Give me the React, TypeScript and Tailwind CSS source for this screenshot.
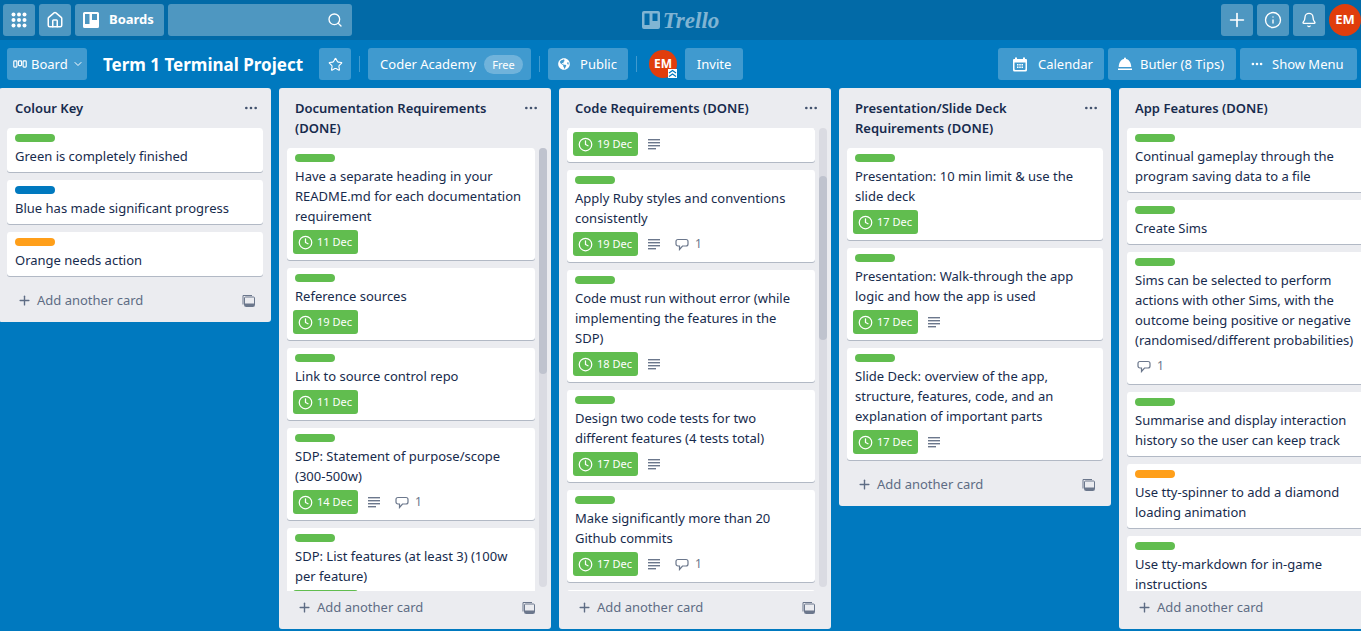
import React from "react";
import { Bell, Home, Info, Plus, Search, Star, ChevronDown, Ellipsis, Clock } from "lucide-react";
import { FaGlobeAmericas } from "react-icons/fa";

type CardT = { label?: string; lines?: string[]; date?: string; desc?: boolean; comments?: boolean };
type ListT = { title: string[]; cards: CardT[]; thumb?: [number, number]; };

const g = "bg-[#61bd4f]";
const lists: ListT[] = [
  {
    title: ["Colour Key"],
    cards: [
      { label: g, lines: ["Green is completely finished"] },
      { label: "bg-[#0079bf]", lines: ["Blue has made significant progress"] },
      { label: "bg-[#ff9f1a]", lines: ["Orange needs action"] },
    ],
  },
  {
    title: ["Documentation Requirements", "(DONE)"],
    thumb: [0, 226],
    cards: [
      { label: g, lines: ["Have a separate heading in your", "README.md for each documentation", "requirement"], date: "11 Dec" },
      { label: g, lines: ["Reference sources"], date: "19 Dec" },
      { label: g, lines: ["Link to source control repo"], date: "11 Dec" },
      { label: g, lines: ["SDP: Statement of purpose/scope", "(300-500w)"], date: "14 Dec", desc: true, comments: true },
      { label: g, lines: ["SDP: List features (at least 3) (100w", "per feature)"], date: "14 Dec" },
    ],
  },
  {
    title: ["Code Requirements (DONE)"],
    thumb: [48, 164],
    cards: [
      { date: "19 Dec", desc: true },
      { label: g, lines: ["Apply Ruby styles and conventions", "consistently"], date: "19 Dec", desc: true, comments: true },
      { label: g, lines: ["Code must run without error (while", "implementing the features in the", "SDP)"], date: "18 Dec", desc: true },
      { label: g, lines: ["Design two code tests for two", "different features (4 tests total)"], date: "17 Dec", desc: true },
      { label: g, lines: ["Make significantly more than 20", "Github commits"], date: "17 Dec", desc: true, comments: true },
      { label: g },
    ],
  },
  {
    title: ["Presentation/Slide Deck", "Requirements (DONE)"],
    cards: [
      { label: g, lines: ["Presentation: 10 min limit & use the", "slide deck"], date: "17 Dec" },
      { label: g, lines: ["Presentation: Walk-through the app", "logic and how the app is used"], date: "17 Dec", desc: true },
      { label: g, lines: ["Slide Deck: overview of the app,", "structure, features, code, and an", "explanation of important parts"], date: "17 Dec", desc: true },
    ],
  },
  {
    title: ["App Features (DONE)"],
    cards: [
      { label: g, lines: ["Continual gameplay through the", "program saving data to a file"] },
      { label: g, lines: ["Create Sims"] },
      { label: g, lines: ["Sims can be selected to perform", "actions with other Sims, with the", "outcome being positive or negative", "(randomised/different probabilities)"], comments: true },
      { label: g, lines: ["Summarise and display interaction", "history so the user can keep track"] },
      { label: "bg-[#ff9f1a]", lines: ["Use tty-spinner to add a diamond", "loading animation"] },
      { label: g, lines: ["Use tty-markdown for in-game", "instructions"] },
    ],
  },
];

function Comment() {
  return (
    <svg width="14" height="14" viewBox="0 0 14 14" fill="none" stroke="#6b778c" strokeWidth="1.200">
      <path d="M3 2.500h8c1.200 0 2 .8 2 2v2.500c0 1.200-.8 2-2 2H7.500L4.500 12.500V9H3c-1.200 0-2-.8-2-2V4.500c0-1.200.8-2 2-2z" />
    </svg>
  );
}

function DescIcon() {
  return (
    <svg width="12" height="11" viewBox="0 0 12 11" fill="#6b778c" className="ml-[10px]">
      <rect x="0" y="0" width="12" height="1.400" />
      <rect x="0" y="3" width="12" height="1.400" />
      <rect x="0" y="6" width="12" height="1.400" />
      <rect x="0" y="9" width="8" height="1.400" />
    </svg>
  );
}

function Card({ c }: { c: CardT }) {
  const isPartial = !c.label;
  return (
    <div className={`mb-2 shrink-0 rounded-[3px] bg-white px-2 pb-1.5 shadow-[0_1px_0_rgba(9,30,66,0.25)] ${isPartial ? "rounded-t-none pt-1" : "pt-1.5"}`}>
      {c.label && <div className={`mb-1 h-2 w-10 rounded ${c.label}`} />}
      {c.lines && (
        <div className="whitespace-nowrap text-[13px] leading-5 text-[#172b4d]">
          {c.lines.map((l) => (
            <div key={l}>{l}</div>
          ))}
        </div>
      )}
      {(c.date || c.comments) && (
        <div className={`-ml-0.5 flex h-6 items-center text-[#6b778c] ${c.lines ? "mt-1" : ""}`}>
          {c.date && (
            <div className="flex h-6 w-[65px] items-center rounded-[3px] bg-[#61bd4f] pl-[5px] text-[11px] text-white">
              <Clock size={15} strokeWidth={2} />
              <span className="ml-[4px]">{c.date}</span>
            </div>
          )}
          {c.desc && <DescIcon />}
          {c.comments && (
            <div className={`flex items-center text-[12px] ${c.date ? "ml-[15px]" : "ml-[4px]"}`}>
              <Comment />
              <span className="ml-[6px]">1</span>
            </div>
          )}
        </div>
      )}
    </div>
  );
}

function TemplateIcon() {
  return (
    <svg width="13" height="13" viewBox="0 0 13 13" fill="none" stroke="#6b778c" strokeWidth="1">
      <path d="M1 10.500V1.500h9" />
      <rect x="2.500" y="3" width="10" height="9.500" rx="1" />
      <path d="M3 9.500h9v2.500H3z" fill="#6b778c" stroke="none" />
    </svg>
  );
}

function List({ l }: { l: ListT }) {
  return (
    <div className="flex max-h-full w-[272px] shrink-0 flex-col rounded-[3px] bg-[#ebecf0]">
      <div className="relative shrink-0 px-4 py-2.5 text-[13px] font-semibold leading-5 text-[#172b4d]">
        {l.title.map((t) => (
          <div key={t}>{t}</div>
        ))}
        <Ellipsis size={16} strokeWidth={2} className="absolute right-[12px] top-[12px] text-[#42526e]" />
      </div>
      <div className="flex min-h-0 pl-2">
        <div className={`flex min-h-0 shrink-0 flex-col overflow-hidden rounded-t-[3px] ${l.thumb ? "w-[248px]" : "w-[256px]"}`}>
          {l.cards.map((c, i) => (
            <Card key={i} c={c} />
          ))}
        </div>
        {l.thumb && (
          <div className="mb-1 ml-1 w-2 shrink-0 rounded bg-[#dadbe2]">
            {/* scrollbar thumb */}
            <div className="w-2 rounded bg-[#bfc3ce]" style={{ marginTop: l.thumb[0], height: l.thumb[1] }} />
          </div>
        )}
      </div>
      <div className="mb-2 ml-2 mr-2 mt-0.5 flex h-7 shrink-0 items-center justify-between pl-[10px] pr-2 text-[13px] text-[#5e6c84]">
        <div className="flex items-center">
          <Plus size={15} strokeWidth={2.200} />
          <span className="ml-[5px] pt-0.5">Add another card</span>
        </div>
        <TemplateIcon />
      </div>
    </div>
  );
}

const topBtn = "flex h-8 items-center justify-center rounded-[3px] bg-white/30 text-white";
const barBtn = "flex h-8 items-center whitespace-nowrap rounded-[3px] bg-white/25 text-[13px] text-white";

function Avatar({ size, text }: { size: string; text: string }) {
  return <div className={`flex items-center justify-center rounded-full bg-[#e03d0c] font-bold text-white ${size} ${text}`}>EM</div>;
}

export default function App() {
  return (
    <div className="flex h-screen flex-col overflow-hidden bg-[#0079bf] [font-family:'Noto_Sans','Open_Sans',sans-serif]">
      <header className="grid h-10 shrink-0 grid-cols-[1fr_auto_1fr] items-center bg-[#026aa7]">
        <div className="flex gap-1 pl-[3px]">
          <button className={`${topBtn} w-8`}>
            <svg width="16" height="16" viewBox="0 0 16 16" fill="currentColor">
              {[2.500, 8, 13.500].flatMap((y) => [2.500, 8, 13.500].map((x) => <circle key={`${x}-${y}`} cx={x} cy={y} r="2" />))}
            </svg>
          </button>
          <button className={`${topBtn} w-8`}>
            <Home size={18} strokeWidth={2} />
          </button>
          <button className={`${topBtn} w-[89px] pl-2 font-bold`}>
            <svg width="16" height="16" viewBox="0 0 16 16" className="shrink-0">
              <path fillRule="evenodd" fill="#fff" d="M1.500 0h13A1.500 1.500 0 0 1 16 1.500v13a1.500 1.500 0 0 1-1.500 1.500h-13A1.500 1.500 0 0 1 0 14.500v-13A1.500 1.500 0 0 1 1.500 0zM2 2v10h4.500V2zm7 0v6h5V2z" />
            </svg>
            <span className="ml-[10px] mr-auto text-[13px]">Boards</span>
          </button>
          <div className={`${topBtn} w-[184px] justify-end pr-[9px]`}>
            <Search size={16} strokeWidth={2} />
          </div>
        </div>
        <div className="flex items-center text-white/50">
          <svg width="18" height="18" viewBox="0 0 18 18">
            <path fillRule="evenodd" fill="currentColor" d="M2 0h14a2 2 0 0 1 2 2v14a2 2 0 0 1-2 2H2a2 2 0 0 1-2-2V2a2 2 0 0 1 2-2zm.500 2.500v11.500h5V2.500zm8 0v7.500h5V2.500z" />
          </svg>
          <span className="ml-[3px] text-[23px] font-bold italic leading-none [font-family:'Liberation_Serif',serif]">Trello</span>
        </div>
        <div className="flex items-center justify-end gap-1">
          <button className={`${topBtn} w-8`}><Plus size={22} strokeWidth={1.800} /></button>
          <button className={`${topBtn} w-8`}><Info size={18} strokeWidth={1.800} /></button>
          <button className={`${topBtn} w-8`}><Bell size={16} strokeWidth={2} /></button>
          <Avatar size="h-8 w-8" text="text-[13px]" />
        </div>
      </header>

      <div className="flex h-12 shrink-0 items-center justify-between pl-[7px] pr-1">
        <div className="flex items-center">
          <button className={`${barBtn} w-20 pl-1.5`}>
            <svg width="14" height="10" viewBox="0 0 18 10" fill="none" stroke="#fff" strokeWidth="1.500">
              <rect x="1" y="1" width="4" height="8" rx="1" />
              <rect x="7" y="1" width="4" height="6" rx="1" />
              <rect x="13" y="1" width="4" height="8" rx="1" />
            </svg>
            <span className="ml-[4px] pt-0.5">Board</span>
            <ChevronDown size={12} className="ml-1" />
          </button>
          <div className="ml-4 whitespace-nowrap pt-0.5 text-[17px] font-bold text-white">Term 1 Terminal Project</div>
          <button className={`${barBtn} ml-4 w-8 justify-center`}><Star size={15} strokeWidth={1.800} /></button>
          <div className="ml-2 h-4 w-px bg-white/25" />
          <button className={`${barBtn} ml-2 w-[163px] pl-3`}>
            <span className="pt-0.5">Coder Academy</span>
            <span className="ml-2 rounded-full bg-white/25 px-2 text-[11px] leading-[19px]">Free</span>
          </button>
          <div className="ml-2 h-4 w-px bg-white/25" />
          <button className={`${barBtn} ml-2 w-20 pl-2.5`}>
            <FaGlobeAmericas size={12} />
            <span className="ml-[10px] pt-0.5">Public</span>
          </button>
          <div className="ml-2 h-4 w-px bg-white/25" />
          <div className="relative ml-3">
            <Avatar size="h-7 w-7" text="text-[12px]" />
            <svg width="9" height="9" viewBox="0 0 9 9" className="absolute bottom-0 right-0 bg-white" fill="none" stroke="#0079bf" strokeWidth="1.200">
              <path d="M1 4l3.500-2.500L8 4M1 7.500L4.500 5 8 7.500" />
            </svg>
          </div>
          <button className={`${barBtn} ml-2 w-[58px] justify-center pt-0.5`}>Invite</button>
        </div>
        <div className="flex items-center gap-1">
          <button className={`${barBtn} w-[106px] pl-3.5`}>
            <svg width="16" height="16" viewBox="0 0 16 16" fill="#fff">
              <path fillRule="evenodd" d="M3 1.500h2V3h6V1.500h2V3h1a1 1 0 0 1 1 1v10a1.500 1.500 0 0 1-1.500 1.500h-11A1.500 1.500 0 0 1 1 14V4a1 1 0 0 1 1-1h1zM2.500 6.500V13a1 1 0 0 0 1 1h9a1 1 0 0 0 1-1V6.500zM5 8h1.500v1.500H5zm2.250 0h1.500v1.500h-1.500zM9.500 8H11v1.500H9.500zM5 10.500h1.500V12H5zm2.250 0h1.500V12h-1.500zm2.250 0H11V12H9.500z" />
            </svg>
            <span className="ml-[10px] pt-0.5">Calendar</span>
          </button>
          <button className={`${barBtn} w-[128px] pl-[9px]`}>
            <svg width="16" height="16" viewBox="0 0 16 16" fill="#fff">
              <path d="M8 1.500a1 1 0 0 1 1 1v.5c3 .6 5 3.300 5.300 8H1.700C2 6.300 4 3.600 7 3v-.5a1 1 0 0 1 1-1zM1 12.500h14v1.500H1z" />
            </svg>
            <span className="ml-[7px] pt-0.5">Butler (8 Tips)</span>
          </button>
          <button className={`${barBtn} w-[117px] pl-2.5`}>
            <Ellipsis size={14} strokeWidth={2.500} />
            <span className="ml-[8px] pt-0.5">Show Menu</span>
          </button>
        </div>
      </div>

      <div className="-ml-px mb-0.5 flex min-h-0 flex-1 items-start gap-2">
        {lists.map((l) => (
          <List key={l.title[0]} l={l} />
        ))}
      </div>
    </div>
  );
}
